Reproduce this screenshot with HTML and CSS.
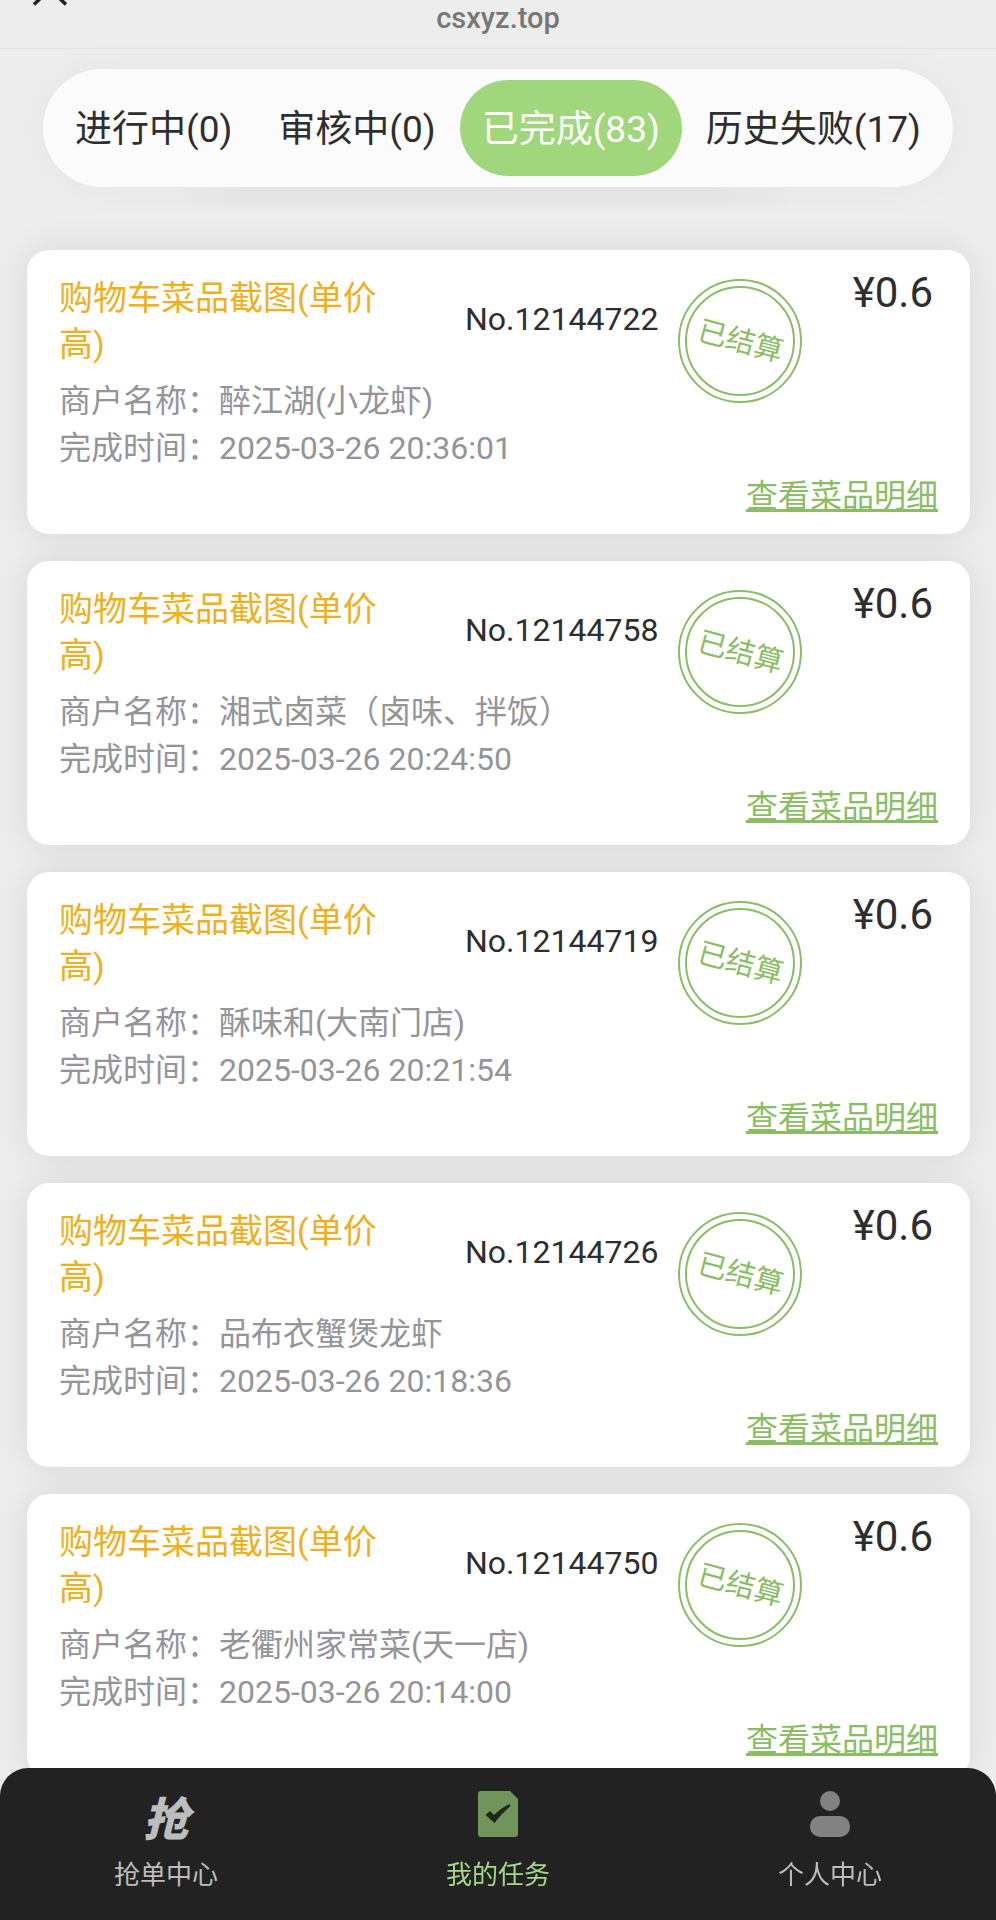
FILE: index.html
```html
<!DOCTYPE html>
<html lang="zh-CN">
<head>
<meta charset="utf-8">
<meta name="viewport" content="width=device-width, initial-scale=1">
<title>我的任务</title>
<link rel="stylesheet" href="styles.css">
</head>
<body>
<div class="app">
  <header class="topbar">
    <button class="close" type="button" aria-label="关闭">
      <svg width="36" height="6" viewBox="0 0 36 6"><path d="M2 4.500 18-11 34 4.500" fill="none" stroke="#222" stroke-width="3.500"/></svg>
    </button>
    <span class="host">csxyz.top</span>
  </header>
  <nav class="tabs">
    <button class="tab" type="button">进行中(0)</button>
    <button class="tab" type="button">审核中(0)</button>
    <button class="tab active" type="button">已完成(83)</button>
    <button class="tab" type="button">历史失败(17)</button>
  </nav>
  <main class="list">
    <article class="card">
      <div class="head">
        <h2 class="title">购物车菜品截图(单价高)</h2>
        <span class="number">No.12144722</span>
        <div class="stamp"><div class="ring"><span class="stamp-text">已结算</span></div></div>
        <span class="price">¥0.6</span>
      </div>
      <p class="row">商户名称：醉江湖(小龙虾)</p>
      <p class="row">完成时间：2025-03-26 20:36:01</p>
      <a class="detail" href="#">查看菜品明细</a>
    </article>
    <article class="card">
      <div class="head">
        <h2 class="title">购物车菜品截图(单价高)</h2>
        <span class="number">No.12144758</span>
        <div class="stamp"><div class="ring"><span class="stamp-text">已结算</span></div></div>
        <span class="price">¥0.6</span>
      </div>
      <p class="row">商户名称：湘式卤菜（卤味、拌饭）</p>
      <p class="row">完成时间：2025-03-26 20:24:50</p>
      <a class="detail" href="#">查看菜品明细</a>
    </article>
    <article class="card">
      <div class="head">
        <h2 class="title">购物车菜品截图(单价高)</h2>
        <span class="number">No.12144719</span>
        <div class="stamp"><div class="ring"><span class="stamp-text">已结算</span></div></div>
        <span class="price">¥0.6</span>
      </div>
      <p class="row">商户名称：酥味和(大南门店)</p>
      <p class="row">完成时间：2025-03-26 20:21:54</p>
      <a class="detail" href="#">查看菜品明细</a>
    </article>
    <article class="card">
      <div class="head">
        <h2 class="title">购物车菜品截图(单价高)</h2>
        <span class="number">No.12144726</span>
        <div class="stamp"><div class="ring"><span class="stamp-text">已结算</span></div></div>
        <span class="price">¥0.6</span>
      </div>
      <p class="row">商户名称：品布衣蟹煲龙虾</p>
      <p class="row">完成时间：2025-03-26 20:18:36</p>
      <a class="detail" href="#">查看菜品明细</a>
    </article>
    <article class="card">
      <div class="head">
        <h2 class="title">购物车菜品截图(单价高)</h2>
        <span class="number">No.12144750</span>
        <div class="stamp"><div class="ring"><span class="stamp-text">已结算</span></div></div>
        <span class="price">¥0.6</span>
      </div>
      <p class="row">商户名称：老衢州家常菜(天一店)</p>
      <p class="row">完成时间：2025-03-26 20:14:00</p>
      <a class="detail" href="#">查看菜品明细</a>
    </article>
  </main>
  <nav class="bottom">
    <a class="item" href="#">
      <span class="grab">抢</span>
      <span class="label">抢单中心</span>
    </a>
    <a class="item current" href="#">
      <svg class="icon" viewBox="0 0 40 46" width="40" height="46"><path d="M3 0H32L40 8V43Q40 46 37 46H3Q0 46 0 43V3Q0 0 3 0Z" fill="#70945a"/><path d="M7.500 24 12 20 16 24Q23 17 31.500 13L32.500 15Q24 22 16.500 32Z" fill="#1c2a18"/></svg>
      <span class="label">我的任务</span>
    </a>
    <a class="item" href="#">
      <svg class="icon" viewBox="0 0 40 46" width="40" height="46"><circle cx="20" cy="10" r="10" fill="#828282"/><rect y="25" width="40" height="21" rx="10" fill="#828282"/></svg>
      <span class="label">个人中心</span>
    </a>
  </nav>
</div>
</body>
</html>
```
FILE: styles.css
```css
* {
  box-sizing: border-box;
}

body {
  margin: 0;
  background: #ededed;
  color: #2e2e2e;
  font-family: Roboto, "Noto Sans CJK SC", sans-serif;
}

button {
  border: 0;
  padding: 0;
  background: none;
  color: inherit;
  font: inherit;
}

.app {
  display: flex;
  flex-direction: column;
  height: 100vh;
  overflow: hidden;
}

.topbar {
  display: grid;
  grid-template-columns: 1fr auto 1fr;
  align-items: start;
  flex: none;
  height: 49px;
  padding: 0 32px;
  border-bottom: 1px solid #e2e2e2;
}

.close {
  justify-self: start;
  display: flex;
}

.host {
  color: #777;
  font-size: 29px;
  font-weight: 500;
  line-height: 37px;
}

.tabs {
  display: flex;
  justify-content: space-between;
  flex: none;
  margin: 20px 43px 0;
  padding: 11px 10px;
  border-radius: 59px;
  background: #fbfbfb;
  box-shadow: 0 0 40px rgba(0, 0, 0, 0.04);
}

.tab {
  height: 96px;
  padding: 0 22px 5px;
  border-radius: 48px;
  font-size: 37px;
  white-space: nowrap;
}

.tab.active {
  background: #a0d77c;
  color: #fff;
}

.list {
  display: flex;
  flex-direction: column;
  flex: 1;
  gap: 27px;
  min-height: 0;
  overflow: hidden;
  padding: 63px 26px 0 27px;
  background: linear-gradient(90deg, transparent 17%, rgba(0, 0, 0, 0.02) 24%, rgba(0, 0, 0, 0.02) 72%, transparent 80%) top / 100% 21px no-repeat;
}

.card {
  display: flex;
  flex-direction: column;
  flex: none;
  padding: 25px 32px 14px;
  border-radius: 22px;
  background: #fff;
  box-shadow: 0 0 36px rgba(0, 0, 0, 0.09);
}

.head {
  display: flex;
  align-items: flex-start;
  height: 103px;
}

.title {
  width: 334px;
  margin: 0;
  color: #eeb021;
  font-size: 34px;
  font-weight: 400;
  line-height: 46px;
}

.number {
  margin: 25px 0 0 72px;
  font-size: 32px;
  line-height: 38px;
}

.stamp {
  flex: none;
  width: 124px;
  height: 124px;
  margin: 4px 0 0 20px;
  padding: 5px;
  border: 2px solid #8bbd67;
  border-radius: 50%;
}

.ring {
  display: flex;
  align-items: center;
  justify-content: center;
  height: 100%;
  border: 2px solid #8bbd67;
  border-radius: 50%;
}

.stamp-text {
  color: #8bbd67;
  font-size: 29px;
  line-height: 32px;
  transform: rotate(15deg);
}

.price {
  margin: 0 5px 0 auto;
  font-size: 42px;
  line-height: 36px;
}

.row {
  margin: 0;
  color: #949499;
  font-size: 32px;
  line-height: 47px;
}

.detail {
  align-self: flex-end;
  color: #8bbd67;
  font-size: 32px;
  line-height: 48px;
  text-decoration-thickness: 3px;
}

.bottom {
  display: grid;
  grid-template-columns: repeat(3, 1fr);
  position: fixed;
  right: 0;
  bottom: 0;
  left: 0;
  padding: 23px 0 26px;
  border-radius: 28px 28px 0 0;
  background: #222;
}

.item {
  display: flex;
  flex-direction: column;
  align-items: center;
  gap: 19px;
  color: #bdbdbd;
  text-decoration: none;
}

.item.current {
  color: #a5d886;
}

.grab {
  height: 46px;
  font-size: 46px;
  font-style: italic;
  font-weight: 900;
  line-height: 58px;
}

.label {
  font-size: 26px;
  line-height: 38px;
}
```
